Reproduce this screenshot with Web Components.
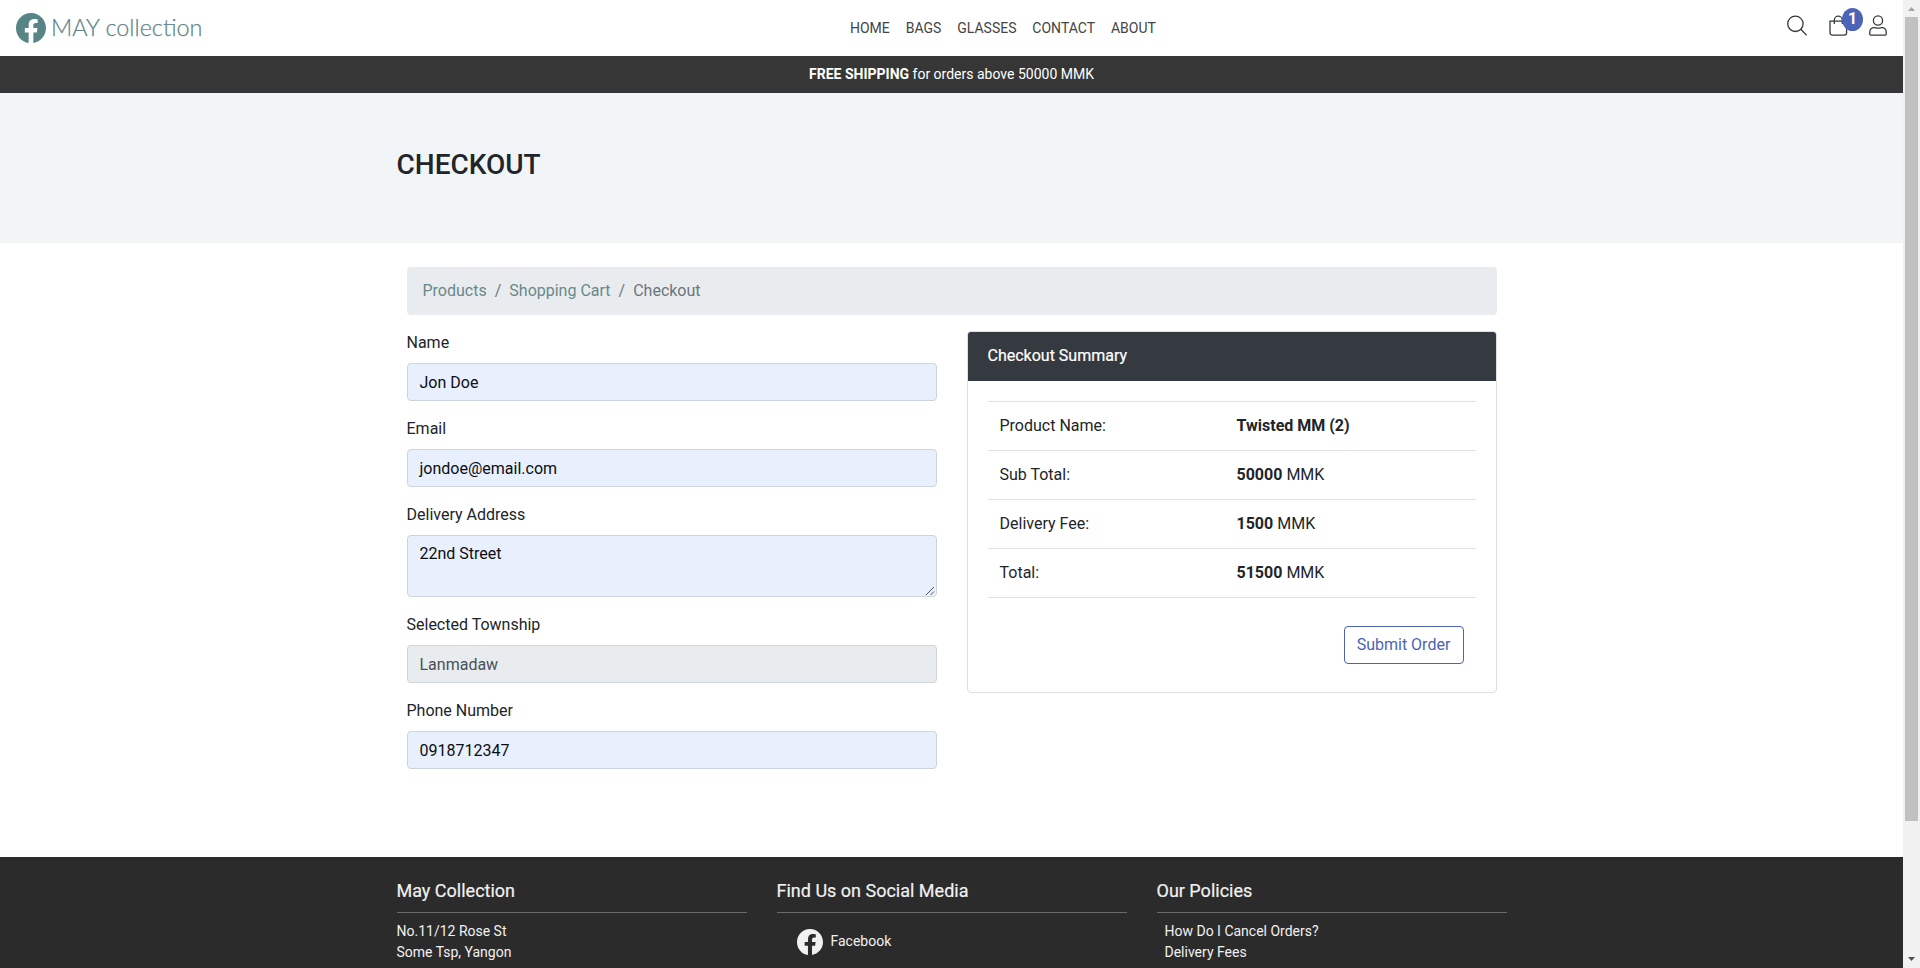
<!DOCTYPE html>
<html lang="en">
<head>
<meta charset="utf-8">
<title>MAY collection</title>
<style>
html,body{margin:0;height:100%;overflow:hidden}
body{font:400 16px/24px Roboto,"Open Sans",sans-serif;color:#212529;background:#fff}
</style>
</head>
<body>
<shop-page></shop-page>
<script>
const define = (name, html) => customElements.define(name, class extends HTMLElement {
  constructor() {
    super();
    const t = document.createElement('template');
    t.innerHTML = html;
    this.attachShadow({ mode: 'open' }).append(t.content.cloneNode(true));
  }
});

define('fb-logo', `<style>:host{display:block;width:30px;height:30px}svg{display:block;width:100%;height:100%}</style>
<svg viewBox="0 0 16 16" fill="currentColor"><path d="M16 8.049c0-4.446-3.582-8.05-8-8.05C3.58 0-.002 3.603-.002 8.05c0 4.017 2.926 7.347 6.75 7.951v-5.625h-2.03V8.05H6.75V6.275c0-2.017 1.195-3.131 3.022-3.131.876 0 1.791.157 1.791.157v1.98h-1.009c-.993 0-1.303.621-1.303 1.258v1.51h2.218l-.354 2.326H9.25V16c3.824-.604 6.75-3.934 6.75-7.951z"/></svg>`);

define('site-header', `<style>
:host{display:grid;grid-template-columns:834px 1fr auto;height:56px;align-items:center;background:#fff}
.brand{display:flex;align-items:center;gap:5px;padding-left:16px;color:#5f8788;font:300 23.4px/30px Lato,"Open Sans",sans-serif;-webkit-text-stroke:.25px #5f8788}
.brand span{padding-bottom:2px}
.brand fb-logo{color:#578485}
nav{display:flex;font-size:14px;line-height:20px;gap:15.9px;padding-left:16px;color:#444}
.icons{display:flex;align-items:flex-start;padding-right:16px;height:26px;color:#343a40}
svg{display:block;fill:none;stroke:currentColor}
.bag{position:relative;margin:0 21px 0 22px}
.badge{position:absolute;left:13px;top:-7px;width:21px;height:23px;border-radius:50%;background:#4c63b6;color:#fff;font-size:16px;font-weight:700;line-height:22px;text-align:center}
</style>
<div class="brand"><fb-logo></fb-logo><span>MAY collection</span></div>
<nav><span>HOME</span><span>BAGS</span><span>GLASSES</span><span>CONTACT</span><span>ABOUT</span></nav>
<div class="icons">
<svg width="20" height="21" viewBox="0 0 20 21" stroke-width="1.3"><circle cx="8.4" cy="8.8" r="7.7"/><path d="M13.8 14.3l5.8 5.9"/></svg>
<div class="bag"><svg width="19" height="21" viewBox="0 0 19 21" stroke-width="1.3"><path d="M1 6.2h16.6v11.5a2.4 2.4 0 0 1-2.4 2.4H3.400a2.400 2.400 0 0 1-2.400-2.400zM5.300 9V5.200a4 4 0 0 1 8 0V9"/></svg><span class="badge">1</span></div>
<svg width="18" height="21" viewBox="0 0 18 21" stroke-width="1.3"><circle cx="9" cy="5.500" r="4.600"/><path d="M2 20.200a1.200 1.200 0 0 1-1.200-1.200v-2.200a4.300 4.300 0 0 1 4.300-4.200c1.300 0 1.900.6 3.900.6s2.600-.6 3.900-.6a4.300 4.300 0 0 1 4.300 4.200v2.200a1.200 1.200 0 0 1-1.200 1.200z"/></svg>
</div>`);

define('promo-bar', `<style>:host{display:block;height:37px;background:#363636;color:#fff;font-size:14px;line-height:36px;text-align:center}</style><slot></slot>`);

define('page-hero', `<style>:host{display:block;box-sizing:border-box;height:150px;background:#f1f5f8;padding:55px 396.5px 0}
h1{margin:0;font-size:28px;line-height:34px;font-weight:500}</style><h1><slot></slot></h1>`);

define('bread-crumb', `<style>:host{display:flex;gap:8px;padding:12px 16px;background:#e9ecef;border-radius:4px;color:#6c757d}
::slotted(a){color:#68888a}</style><slot></slot>`);

define('form-field', `<style>:host{display:block;margin-bottom:16px;--bg:#e8f0fe;--fg:#0b0d12;--h:38px;--top:7px}
:host([readonly]){--bg:#e9ecef;--fg:#495057}
:host([area]){--h:62px;--top:6px}
label{display:block;margin-bottom:8px}
.box{box-sizing:border-box;display:flex;justify-content:space-between;height:var(--h);padding:var(--top) 12px 5px;border:1px solid #ced4da;border-radius:4px;background:var(--bg);color:var(--fg)}
svg{display:none;align-self:flex-end;margin:0 -11px -5px 0}
:host([area]) svg{display:block}</style>
<label><slot name="label"></slot></label>
<div class="box"><span><slot></slot></span><svg width="10" height="10" viewBox="0 0 10 10" stroke="#444" stroke-width=".9"><path d="M1 9L9 1M5.500 9L9 5.500"/></svg></div>`);

define('summary-row', `<style>:host{display:grid;grid-template-columns:237px 1fr;border-top:1px solid #dee2e6}
span{padding:12px}::slotted(b){font-weight:700}</style>
<span><slot name="label"></slot></span><span><slot></slot></span>`);

define('summary-card', `<style>:host{display:block;box-sizing:border-box;height:362px;border:1px solid #dfdfdf;border-radius:4px;overflow:hidden}
header{height:49px;box-sizing:border-box;padding:12px 20px;background:#343a40;color:#fff;line-height:23px;-webkit-text-stroke:.2px #fff}
.body{padding:20px}
.rows{border-bottom:1px solid #dee2e6}
.actions{display:flex;justify-content:flex-end;padding:28px 12px 0}
button{box-sizing:border-box;width:120px;height:38px;padding:0;border:1px solid #4c63b6;border-radius:4px;background:none;color:#4c63b6;font:inherit;line-height:34px}</style>
<header><slot name="title"></slot></header>
<div class="body"><div class="rows"><slot></slot></div>
<div class="actions"><button>Submit Order</button></div></div>`);

define('checkout-form', `<style>:host{display:grid;grid-template-columns:1fr 1fr;gap:30px;align-items:start;margin-top:16px}</style>
<section>
<form-field><span slot="label">Name</span>Jon Doe</form-field>
<form-field><span slot="label">Email</span>jondoe@email.com</form-field>
<form-field area><span slot="label">Delivery Address</span>22nd Street</form-field>
<form-field readonly><span slot="label">Selected Township</span>Lanmadaw</form-field>
<form-field><span slot="label">Phone Number</span>0918712347</form-field>
</section>
<summary-card><span slot="title">Checkout Summary</span>
<summary-row><span slot="label">Product Name:</span><b>Twisted MM (2)</b></summary-row>
<summary-row><span slot="label">Sub Total:</span><b>50000</b> MMK</summary-row>
<summary-row><span slot="label">Delivery Fee:</span><b>1500</b> MMK</summary-row>
<summary-row><span slot="label">Total:</span><b>51500</b> MMK</summary-row>
</summary-card>`);

define('footer-column', `<style>:host{display:block}
h2{margin:0 0 8px;padding:20px 0 8px;font-size:18px;line-height:27px;font-weight:400;border-bottom:1px solid #6a6a6a;-webkit-text-stroke:.2px #f1f1f1}</style>
<h2><slot name="title"></slot></h2><slot></slot>`);

define('site-footer', `<style>:host{display:grid;grid-template-columns:repeat(3,350px);gap:30px;padding:0 396.5px;background:#2b2b2b;color:#f1f1f1;font-size:14px;line-height:21px}
.social{display:flex;align-items:center;gap:8px;padding:8px 20px}
.social span{padding-bottom:2px}
fb-logo{width:26px;height:26px}
.links{padding-left:8px}
.last{padding-top:1px}</style>
<footer-column><span slot="title">May Collection</span><div>No.11/12 Rose St</div><div>Some Tsp, Yangon</div><div class="last">Phone:</div></footer-column>
<footer-column><span slot="title">Find Us on Social Media</span><div class="social"><fb-logo></fb-logo><span>Facebook</span></div></footer-column>
<footer-column><span slot="title">Our Policies</span><div class="links"><div>How Do I Cancel Orders?</div><div>Delivery Fees</div><div class="last">Townships</div></div></footer-column>`);

define('scroll-rail', `<style>:host{display:flex;flex-direction:column;align-items:center;background:#f1f1f1}
.thumb{width:13px;height:804px;background:#c1c1c1}
svg{display:block;width:17px;height:17px}.down{margin-top:auto}</style>
<svg viewBox="0 0 17 17"><path d="M5 11l3.500-4 3.500 4z" fill="#a3a3a3"/></svg><div class="thumb"></div>
<svg class="down" viewBox="0 0 17 17"><path d="M5 6l3.500 4L12 6z" fill="#505050"/></svg>`);

define('shop-page', `<style>
:host{display:grid;grid-template-columns:1903px 17px;height:968px;overflow:hidden}
.content{display:flex;flex-direction:column;height:968px;overflow:hidden}
main{box-sizing:border-box;height:614px;flex:none;padding:24px 406.5px 0}
site-header,promo-bar,page-hero,site-footer{flex:none}</style>
<div class="content">
<site-header></site-header>
<promo-bar><b>FREE SHIPPING</b> for orders above 50000 MMK</promo-bar>
<page-hero>CHECKOUT</page-hero>
<main>
<bread-crumb><a>Products</a><span>/</span><a>Shopping Cart</a><span>/</span><span>Checkout</span></bread-crumb>
<checkout-form></checkout-form>
</main>
<site-footer></site-footer>
</div>
<scroll-rail></scroll-rail>`);
</script>
</body>
</html>
